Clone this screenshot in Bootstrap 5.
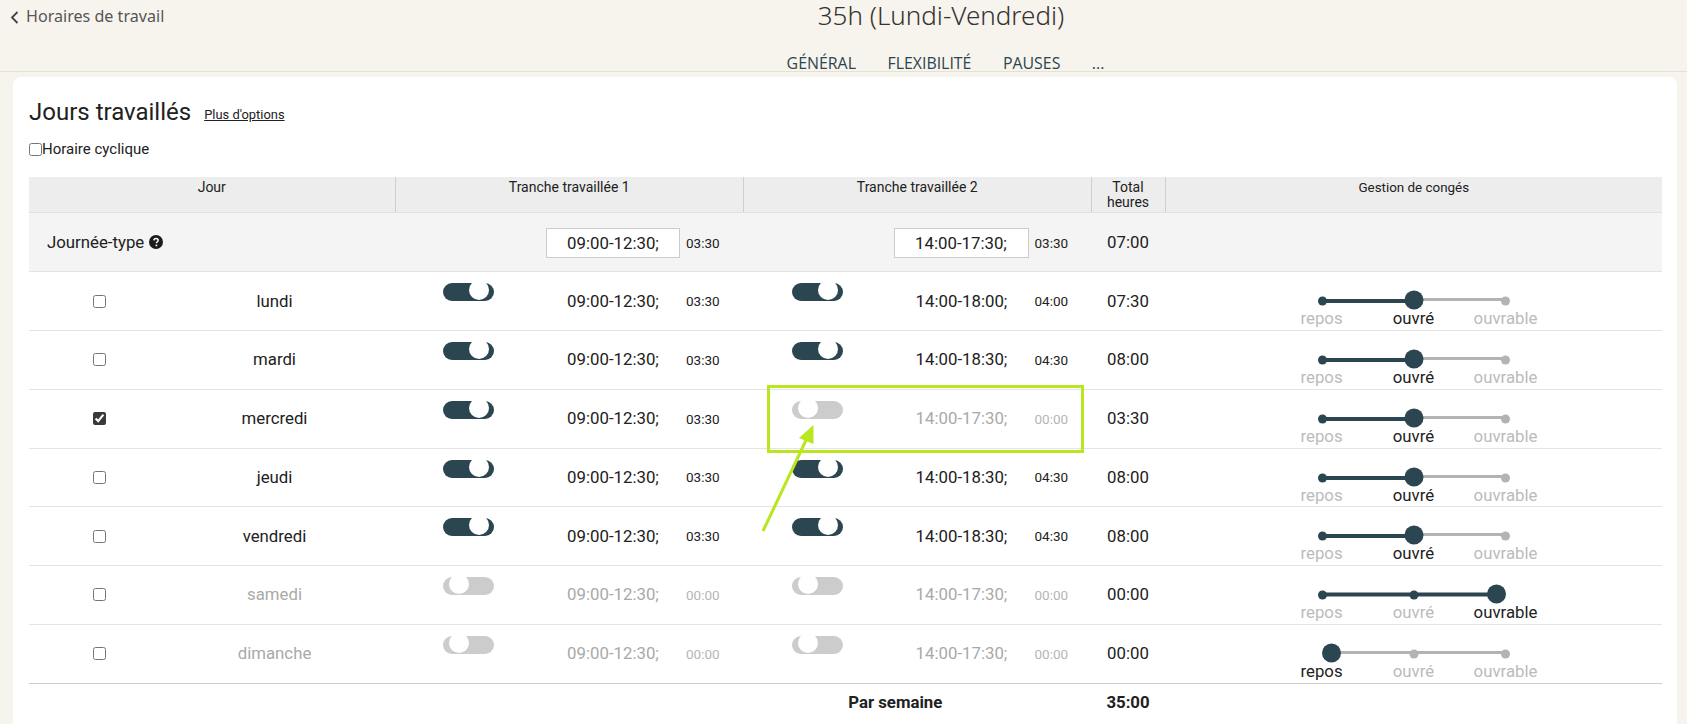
<!DOCTYPE html>
<html lang="fr">
<head>
<meta charset="utf-8">
<title>Jours travaillés</title>
<link href="https://cdn.jsdelivr.net/npm/bootstrap@5.3.0/dist/css/bootstrap.min.css" rel="stylesheet">
<style>
html,body{height:724px;overflow:hidden}
body{background:#f7f4ed;font-family:Roboto,"Liberation Sans",sans-serif;color:#212121;position:relative}
.topbar{height:72px;border-bottom:1px solid #e4e1d9}
.back-link{width:195px;height:33px;padding-left:10px;color:#555;font:16.1px/33px "Noto Sans",sans-serif}
.back-link svg{margin-right:7px;vertical-align:-2px}
.page-title{font:300 26px/30px "Noto Sans",sans-serif;color:#333;height:33px}
.tabs{padding-left:204px;gap:31.5px;font:15.9px/20px "Open Sans",sans-serif;color:#2b4650;height:20px;margin-top:20px}
.sheet{margin:5px 10px 0 13px;border:0;border-radius:8px 8px 0 0;padding:16px 15px 0 16px;height:660px}
.sheet-title{font-size:24px;line-height:38px;font-weight:400;margin:0;color:#212121}
.more-link{font-size:12.9px;color:#212121;margin:6px 0 0 13px}
.cyc{font-size:15px;line-height:18px;margin-top:9px;margin-bottom:19px}
input[type=checkbox].nat{width:13px;height:13px;margin:0;accent-color:#3a3a3a;display:block}
.sched.table{table-layout:fixed;width:1633px;margin:0;color:#212121}
.sched.table>*>tr>*{padding:0;border-bottom:1px solid #e4e4e4;height:58.75px;background:transparent;box-shadow:none;color:inherit}
.sched.table>thead>tr>th{height:35px;background:#ededed;font-weight:400;font-size:14px;line-height:15px;text-align:center;vertical-align:top;padding-top:3px;border-right:1px solid #cfcfcf;border-bottom-color:#e0e0e0}
.sched.table>thead>tr>th:last-child{border-right:0;font-size:13.4px}
.sched.table>tbody>tr.typ>td{background:#f4f4f4;height:59.75px}
.sched.table>tbody>tr.typ>td.tot{padding-top:2px}
.sched.table>tbody>tr.last>td{border-bottom-color:#ccc}
.sched.table>tfoot>tr>td{border:0;height:38px;font-weight:700;font-size:16.8px}
.c1{width:366px}.c2{width:348.5px}.c3{width:347.5px}.c4{width:74px}
.daycell{display:flex;align-items:center;height:57.75px;font-size:16.8px}
.chk{width:140px;display:flex;justify-content:center}
.dname{width:211px;text-align:center}
.off{color:#a9a9a9}
.slot{display:flex;align-items:center;height:57.75px;padding:0 0 0 48px;font-size:16.8px}
.typ .slot{padding-top:2px;height:58.75px}
.tog{position:relative;width:51px;height:18px;border-radius:9px;background:#2b4650;align-self:flex-start;margin-top:11px;flex:none}
.tog::after{content:"";position:absolute;right:5px;top:-3px;width:20px;height:20px;border-radius:50%;background:#fff}
.tog.dis{background:#ccc}
.tog.dis::after{right:auto;left:6px}
.tm{width:134px;margin-left:52px;text-align:center;flex:none}
.tfield{margin-left:102px;background:#fff;border:1px solid #ccc;height:30px;line-height:28px}
td:nth-child(2) .tfield{margin-left:103px}
td:nth-child(3) .tfield{width:135px}
.dur{font-size:13.5px;margin-left:6px}
.dur.off{color:#b5b5b5}
.tot{font-size:16.8px;text-align:center}
.typ-label{font-size:16.8px;height:58.75px;padding:1px 0 0 18px;display:flex;align-items:center;gap:5px}
.slider-box{width:276px;margin:18px auto 0}
.slider-box svg{display:block;margin:0 auto}
.lbls{display:flex;font-size:16.8px;line-height:20px;color:#bbb;text-align:center;margin-top:-2px}
.lbls span{width:92px}
.lbls .on{color:#212121}
.ftlabel{padding-right:44px;text-align:center}
.annot{position:absolute;left:0;top:0;pointer-events:none}
</style>
</head>
<body>
<svg width="0" height="0" class="d-block" style="position:absolute">
<defs>
<symbol id="sl-mid" viewBox="0 0 200 20"><path d="M100 9.5H191.5" stroke="#b3b3b3" stroke-width="3"/><circle cx="191.5" cy="11" r="4.5" fill="#b3b3b3"/><path d="M8.5 11H100" stroke="#2b4650" stroke-width="4"/><circle cx="8.5" cy="11" r="4.5" fill="#2b4650"/><circle cx="100" cy="10" r="9.5" fill="#2b4650"/></symbol>
<symbol id="sl-end" viewBox="0 0 200 20"><path d="M8.5 10.5H182" stroke="#2b4650" stroke-width="4"/><circle cx="8.5" cy="11" r="4.5" fill="#2b4650"/><circle cx="100" cy="11" r="4.5" fill="#2b4650"/><circle cx="182.5" cy="10" r="9.5" fill="#2b4650"/></symbol>
<symbol id="sl-start" viewBox="0 0 200 20"><path d="M17 9.5H191.5" stroke="#b3b3b3" stroke-width="3"/><circle cx="100" cy="11" r="4.5" fill="#b3b3b3"/><circle cx="191.5" cy="11" r="4.5" fill="#b3b3b3"/><circle cx="17.5" cy="10" r="9.5" fill="#2b4650"/></symbol>
</defs>
</svg>

<header class="topbar">
  <div class="d-flex">
    <div class="back-link"><svg width="9" height="13" viewBox="0 0 9 13"><path d="M7.5 1 2 6.5 7.5 12" fill="none" stroke="#444" stroke-width="1.8"/></svg>Horaires de travail</div>
    <div class="page-title flex-grow-1 text-center">35h (Lundi-Vendredi)</div>
  </div>
  <nav class="tabs d-flex justify-content-center">
    <span>GÉNÉRAL</span><span>FLEXIBILITÉ</span><span>PAUSES</span><span>...</span>
  </nav>
</header>

<main class="card sheet">
  <div class="d-flex align-items-center">
    <h1 class="sheet-title">Jours travaillés</h1>
    <a class="more-link" href="#">Plus d'options</a>
  </div>
  <div class="cyc d-flex align-items-center"><input type="checkbox" class="nat" aria-label="Horaire cyclique"><span>Horaire cyclique</span></div>
  <table class="table sched">
    <thead>
      <tr><th class="c1">Jour</th><th class="c2">Tranche travaillée 1</th><th class="c3">Tranche travaillée 2</th><th class="c4">Total<br>heures</th><th>Gestion de congés</th></tr>
    </thead>
    <tbody>
      <tr class="typ">
        <td><div class="typ-label">Journée-type <svg width="14" height="14" viewBox="0 0 14 14"><circle cx="7" cy="7" r="7" fill="#1c1c1c"/><path d="M4.9 5.4C5 4.1 5.9 3.4 7.1 3.4c1.2 0 2.1.8 2.1 1.9 0 .9-.5 1.3-1.1 1.7-.5.4-.7.6-.7 1.2" fill="none" stroke="#fff" stroke-width="1.5"/><circle cx="7.4" cy="10.4" r=".95" fill="#fff"/></svg></div></td>
        <td><div class="slot"><span class="tm tfield">09:00-12:30;</span><span class="dur">03:30</span></div></td>
        <td><div class="slot"><span class="tm tfield">14:00-17:30;</span><span class="dur">03:30</span></div></td>
        <td class="tot align-middle">07:00</td>
        <td></td>
      </tr>
      <tr>
        <td><div class="daycell"><div class="chk"><input type="checkbox" class="nat" aria-label="lundi"></div><div class="dname">lundi</div></div></td>
        <td><div class="slot"><div class="tog"></div><span class="tm">09:00-12:30;</span><span class="dur">03:30</span></div></td>
        <td><div class="slot"><div class="tog"></div><span class="tm">14:00-18:00;</span><span class="dur">04:00</span></div></td>
        <td class="tot align-middle">07:30</td>
        <td class="align-top"><div class="slider-box"><svg width="200" height="20"><use href="#sl-mid"/></svg><div class="lbls"><span>repos</span><span class="on">ouvré</span><span>ouvrable</span></div></div></td>
      </tr>
      <tr>
        <td><div class="daycell"><div class="chk"><input type="checkbox" class="nat" aria-label="mardi"></div><div class="dname">mardi</div></div></td>
        <td><div class="slot"><div class="tog"></div><span class="tm">09:00-12:30;</span><span class="dur">03:30</span></div></td>
        <td><div class="slot"><div class="tog"></div><span class="tm">14:00-18:30;</span><span class="dur">04:30</span></div></td>
        <td class="tot align-middle">08:00</td>
        <td class="align-top"><div class="slider-box"><svg width="200" height="20"><use href="#sl-mid"/></svg><div class="lbls"><span>repos</span><span class="on">ouvré</span><span>ouvrable</span></div></div></td>
      </tr>
      <tr>
        <td><div class="daycell"><div class="chk"><input type="checkbox" class="nat" checked aria-label="mercredi"></div><div class="dname">mercredi</div></div></td>
        <td><div class="slot"><div class="tog"></div><span class="tm">09:00-12:30;</span><span class="dur">03:30</span></div></td>
        <td><div class="slot"><div class="tog dis"></div><span class="tm off">14:00-17:30;</span><span class="dur off">00:00</span></div></td>
        <td class="tot align-middle">03:30</td>
        <td class="align-top"><div class="slider-box"><svg width="200" height="20"><use href="#sl-mid"/></svg><div class="lbls"><span>repos</span><span class="on">ouvré</span><span>ouvrable</span></div></div></td>
      </tr>
      <tr>
        <td><div class="daycell"><div class="chk"><input type="checkbox" class="nat" aria-label="jeudi"></div><div class="dname">jeudi</div></div></td>
        <td><div class="slot"><div class="tog"></div><span class="tm">09:00-12:30;</span><span class="dur">03:30</span></div></td>
        <td><div class="slot"><div class="tog"></div><span class="tm">14:00-18:30;</span><span class="dur">04:30</span></div></td>
        <td class="tot align-middle">08:00</td>
        <td class="align-top"><div class="slider-box"><svg width="200" height="20"><use href="#sl-mid"/></svg><div class="lbls"><span>repos</span><span class="on">ouvré</span><span>ouvrable</span></div></div></td>
      </tr>
      <tr>
        <td><div class="daycell"><div class="chk"><input type="checkbox" class="nat" aria-label="vendredi"></div><div class="dname">vendredi</div></div></td>
        <td><div class="slot"><div class="tog"></div><span class="tm">09:00-12:30;</span><span class="dur">03:30</span></div></td>
        <td><div class="slot"><div class="tog"></div><span class="tm">14:00-18:30;</span><span class="dur">04:30</span></div></td>
        <td class="tot align-middle">08:00</td>
        <td class="align-top"><div class="slider-box"><svg width="200" height="20"><use href="#sl-mid"/></svg><div class="lbls"><span>repos</span><span class="on">ouvré</span><span>ouvrable</span></div></div></td>
      </tr>
      <tr>
        <td><div class="daycell"><div class="chk"><input type="checkbox" class="nat" aria-label="samedi"></div><div class="dname off">samedi</div></div></td>
        <td><div class="slot"><div class="tog dis"></div><span class="tm off">09:00-12:30;</span><span class="dur off">00:00</span></div></td>
        <td><div class="slot"><div class="tog dis"></div><span class="tm off">14:00-17:30;</span><span class="dur off">00:00</span></div></td>
        <td class="tot align-middle">00:00</td>
        <td class="align-top"><div class="slider-box"><svg width="200" height="20"><use href="#sl-end"/></svg><div class="lbls"><span>repos</span><span>ouvré</span><span class="on">ouvrable</span></div></div></td>
      </tr>
      <tr class="last">
        <td><div class="daycell"><div class="chk"><input type="checkbox" class="nat" aria-label="dimanche"></div><div class="dname off">dimanche</div></div></td>
        <td><div class="slot"><div class="tog dis"></div><span class="tm off">09:00-12:30;</span><span class="dur off">00:00</span></div></td>
        <td><div class="slot"><div class="tog dis"></div><span class="tm off">14:00-17:30;</span><span class="dur off">00:00</span></div></td>
        <td class="tot align-middle">00:00</td>
        <td class="align-top"><div class="slider-box"><svg width="200" height="20"><use href="#sl-start"/></svg><div class="lbls"><span class="on">repos</span><span>ouvré</span><span>ouvrable</span></div></div></td>
      </tr>
    </tbody>
    <tfoot>
      <tr><td colspan="2"></td><td class="align-middle"><div class="ftlabel">Par semaine</div></td><td class="tot align-middle">35:00</td><td></td></tr>
    </tfoot>
  </table>
</main>

<svg class="annot" width="1687" height="724" viewBox="0 0 1687 724">
  <rect x="768.5" y="386.5" width="314" height="65" fill="none" stroke="#b9e61f" stroke-width="3"/>
  <path d="M763 531 808 436" stroke="#b9e61f" stroke-width="3" fill="none"/>
  <path d="M813.5 425 799 438 813.5 444Z" fill="#b9e61f"/>
</svg>
<script src="https://cdn.jsdelivr.net/npm/bootstrap@5.3.0/dist/js/bootstrap.bundle.min.js"></script>
</body>
</html>
